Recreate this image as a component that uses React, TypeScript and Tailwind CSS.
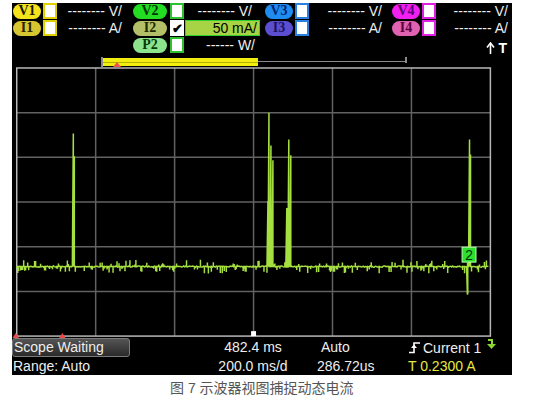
import React from 'react'

type CellProps = {
  label?: string
  pill?: string
  box?: string
  value?: string
  pr?: string
  check?: boolean
}

const Cell: React.FC<CellProps> = ({ label, pill, box, value, pr, check }) => {
  if (!label) return <div className="h-[16px]" />
  return (
    <div className="flex items-center h-[16px]">
      <div className={`w-[28px] h-[15px] rounded-full flex items-center justify-center text-[14px] font-bold leading-none font-['Liberation_Serif'] ${pill}`}>
        {label}
      </div>
      <div className={`ml-[2px] w-[14px] h-[16px] border-2 bg-white flex items-center justify-center text-[13px] leading-none text-black ${box}`}>
        {check ? '✔' : ''}
      </div>
      <div className={`flex-1 text-right text-[14px] leading-[16px] text-[#eeeeee] whitespace-nowrap ${pr}`}>{value}</div>
    </div>
  )
}

function buildTrace() {
  let s = 17
  const rnd = () => {
    s = (s * 9301 + 49297) % 233280
    return s / 233280
  }
  const base = 266
  // tall peaks: x -> list of y tops
  const spikes: Record<number, number[]> = {
    72: [132],
    73: [155, 200],
    268: [200, 217],
    269: [111],
    271: [144],
    273: [159, 255],
    287: [207],
    289: [138],
    291: [154],
    469: [294],
    471: [138],
    472: [153, 218],
  }
  let d = `M15 ${base}`
  for (let x = 15; x <= 490; x++) {
    if (spikes[x]) {
      for (const y of spikes[x]) d += ` L${x} ${y} L${x} ${base}`
      continue
    }
    const r = rnd()
    if (r < 0.32) {
      const up = rnd() < 0.35
      const a = 2 + rnd() * 5
      d += ` L${x} ${base} L${x} ${(up ? base - a : base + a).toFixed(1)} L${x} ${base}`
    } else {
      d += ` L${x} ${(base + (rnd() - 0.5) * 1.2).toFixed(1)}`
    }
  }
  return d
}

const trace = buildTrace()
const vLines = [94.5, 174, 253.5, 333, 412.5]
const hLines = [111, 156, 201, 246, 291]

const App: React.FC = () => {
  return (
    <div className="w-[546px] h-[400px] bg-white overflow-hidden font-['Liberation_Sans',sans-serif]">
      <div className="ml-[12px] mt-[3px] w-[500px] h-[372px] bg-black flex flex-col">
        {/* channel header */}
        <div className="flex flex-col gap-[1px] pl-[1px]">
          <div className="grid grid-cols-[120px_132px_127px_1fr]">
            <Cell label="V1" pill="bg-[#f4e41c] text-[#1a1a00]" box="border-[#e0d000]" value="-------- V/" pr="pr-[11px]" />
            <div className="flex items-center h-[16px]">
              <div className="w-[34px] h-[15px] rounded-full flex items-center justify-center text-[14px] font-bold leading-none font-['Liberation_Serif'] bg-[#22dd22] text-[#003300]">V2</div>
              <div className="ml-[3px] w-[14px] h-[16px] border-2 border-[#30c030] bg-white" />
              <div className="w-[75px] ml-[1px] text-right pr-[8px] text-[14px] leading-[16px] text-[#eeeeee] whitespace-nowrap">-------- V/</div>
            </div>
            <Cell label="V3" pill="bg-[#1e8cf0] text-[#06246a]" box="border-[#2a80e0]" value="-------- V/" pr="pr-[10px]" />
            <Cell label="V4" pill="bg-[#f020f0] text-[#5a0070]" box="border-[#e020e0]" value="-------- V/" pr="pr-[4px]" />
          </div>
          <div className="grid grid-cols-[120px_132px_127px_1fr]">
            <Cell label="I1" pill="bg-[#d8c630] text-[#2a2400]" box="border-[#e0d000]" value="-------- A/" pr="pr-[11px]" />
            <div className="flex items-center h-[16px]">
              <div className="w-[34px] h-[15px] rounded-full flex items-center justify-center text-[14px] font-bold leading-none font-['Liberation_Serif'] bg-[#b4c068] text-[#202800]">I2</div>
              <div className="ml-[3px] w-[14px] h-[16px] bg-white flex items-center justify-center text-[13px] font-bold leading-none text-black">✔</div>
              <div className="w-[75px] ml-[1px] h-[16px] bg-[#a6d444] border border-[#30d030] text-right pr-[2px] text-[14px] leading-[14px] text-black whitespace-nowrap">50 mA/</div>
            </div>
            <Cell label="I3" pill="bg-[#5c4ed0] text-[#1a1460]" box="border-[#2a80e0]" value="-------- A/" pr="pr-[10px]" />
            <Cell label="I4" pill="bg-[#e062b0] text-[#5a0040]" box="border-[#e020e0]" value="-------- A/" pr="pr-[4px]" />
          </div>
          <div className="flex">
            <div className="w-[120px]" />
            <div className="flex items-center h-[16px] w-[132px]">
              <div className="w-[34px] h-[15px] rounded-full flex items-center justify-center text-[14px] font-bold leading-none font-['Liberation_Serif'] bg-[#8ce48c] text-[#0a3a0a]">P2</div>
              <div className="ml-[3px] w-[14px] h-[16px] border-2 border-[#30c030] bg-white" />
              <div className="w-[75px] ml-[1px] text-right pr-[5px] text-[14px] leading-[16px] text-[#eeeeee] whitespace-nowrap">------ W/</div>
            </div>
            <div className="ml-auto mt-[5px] pr-[5px] flex items-start gap-[3px] text-[14px] font-bold leading-[13px] text-white whitespace-nowrap">
              <svg width="9" height="12" viewBox="0 0 9 12">
                <path d="M4.5 12 V2" stroke="#ffffff" strokeWidth="1.6" />
                <path d="M1 5.5 L4.5 1 L8 5.5" fill="none" stroke="#ffffff" strokeWidth="1.6" />
              </svg>
              <span>T</span>
            </div>
          </div>
        </div>

        {/* time window indicator */}
        <div className="h-[11px] flex">
          <div className="relative ml-[89px] w-[306px] h-full">
            <div className="absolute left-0 top-[2px] w-[2px] h-[10px] bg-[#8a8a8a]" />
            <div className="absolute left-0 right-0 top-[6px] h-[1px] bg-[#8a8a8a]" />
            <div className="absolute right-0 top-[2px] w-[2px] h-[6px] bg-[#8a8a8a]" />
            <div className="absolute left-[2px] w-[155px] top-[3px] h-[8px] bg-[#f2ee10] flex flex-col justify-center">
              <div className="h-[1px] bg-[#b8b000]" />
            </div>
            <div className="absolute left-[12px] top-[7px] w-0 h-0 border-l-[4px] border-r-[4px] border-b-[5px] border-l-transparent border-r-transparent border-b-[#f05050]" />
          </div>
        </div>

        {/* plot */}
        <svg width="500" height="274" viewBox="12 64 500 274" className="block">
          {vLines.map((x) => (
            <line key={x} x1={x} y1={66} x2={x} y2={336} stroke="#626262" strokeWidth="1.5" />
          ))}
          {hLines.map((y) => (
            <line key={y} x1={15} y1={y} x2={492} y2={y} stroke="#626262" strokeWidth="1.5" />
          ))}
          <rect x={15} y={66} width={477} height={270} fill="none" stroke="#b8b8b8" strokeWidth="1.5" />
          <path d={trace} fill="none" stroke="#a6e040" strokeWidth="1.5" strokeLinejoin="miter" />
          <rect x={463.5} y={246.5} width={14} height={15} fill="#2ee02e" stroke="#b8ffb0" strokeWidth="1" />
          <text x={470.5} y={259} textAnchor="middle" fontSize="14" fontFamily="Liberation Sans, sans-serif" fill="#003300">2</text>
          <line x1={469} y1={262} x2={469} y2={294} stroke="#a6e040" strokeWidth="1.5" />
          <rect x={251} y={331} width={5} height={5} fill="#ffffff" />
          <polygon points="14,333 18,339 10,339" fill="#f04848" />
          <polygon points="61,333 65,339 57,339" fill="#f04848" />
        </svg>

        {/* status */}
        <div className="grid grid-cols-[188px_106px_95px_1fr] text-[14px] leading-[18px] text-[#eeeeee] whitespace-nowrap">
          <div className="flex flex-col">
            <div className="w-[118px] h-[19px] rounded-[3px] border border-[#7a7a7a] bg-gradient-to-b from-[#555555] to-[#2a2a2a] leading-[17px] pl-[1px]">Scope Waiting</div>
            <div className="pl-[1px]">Range: Auto</div>
          </div>
          <div className="flex flex-col items-center">
            <div className="leading-[19px]">482.4 ms</div>
            <div>200.0 ms/d</div>
          </div>
          <div className="flex flex-col pl-[11px]">
            <div className="pl-[4px] leading-[19px]">Auto</div>
            <div>286.72us</div>
          </div>
          <div className="flex flex-col pl-[7px]">
            <div className="flex items-center h-[19px]">
              <svg width="14" height="13" viewBox="0 0 14 13" className="mr-[1px]">
                <path d="M1 11.5 H6 V2 H12" fill="none" stroke="#ffffff" strokeWidth="1.6" />
                <path d="M3 7 L6 3.5 L9 7 Z" fill="#ffffff" />
              </svg>
              <span>Current 1</span>
              <svg width="10" height="11" viewBox="0 0 10 11" className="ml-[5px] -mt-[6px]">
                <path d="M2 1 H6 V5" fill="none" stroke="#8ad830" strokeWidth="2" />
                <path d="M1 5 H10 L5.5 10 Z" fill="#8ad830" />
              </svg>
            </div>
            <div className="text-[#e8e840]">T 0.2300 A</div>
          </div>
        </div>
      </div>

      <div className="mt-[4px] pl-[170px] text-[14px] leading-[18px] text-[#555555] font-['Liberation_Sans','Noto_Sans_CJK_SC',sans-serif]">
        图 7 示波器视图捕捉动态电流
      </div>
    </div>
  )
}

export default App
